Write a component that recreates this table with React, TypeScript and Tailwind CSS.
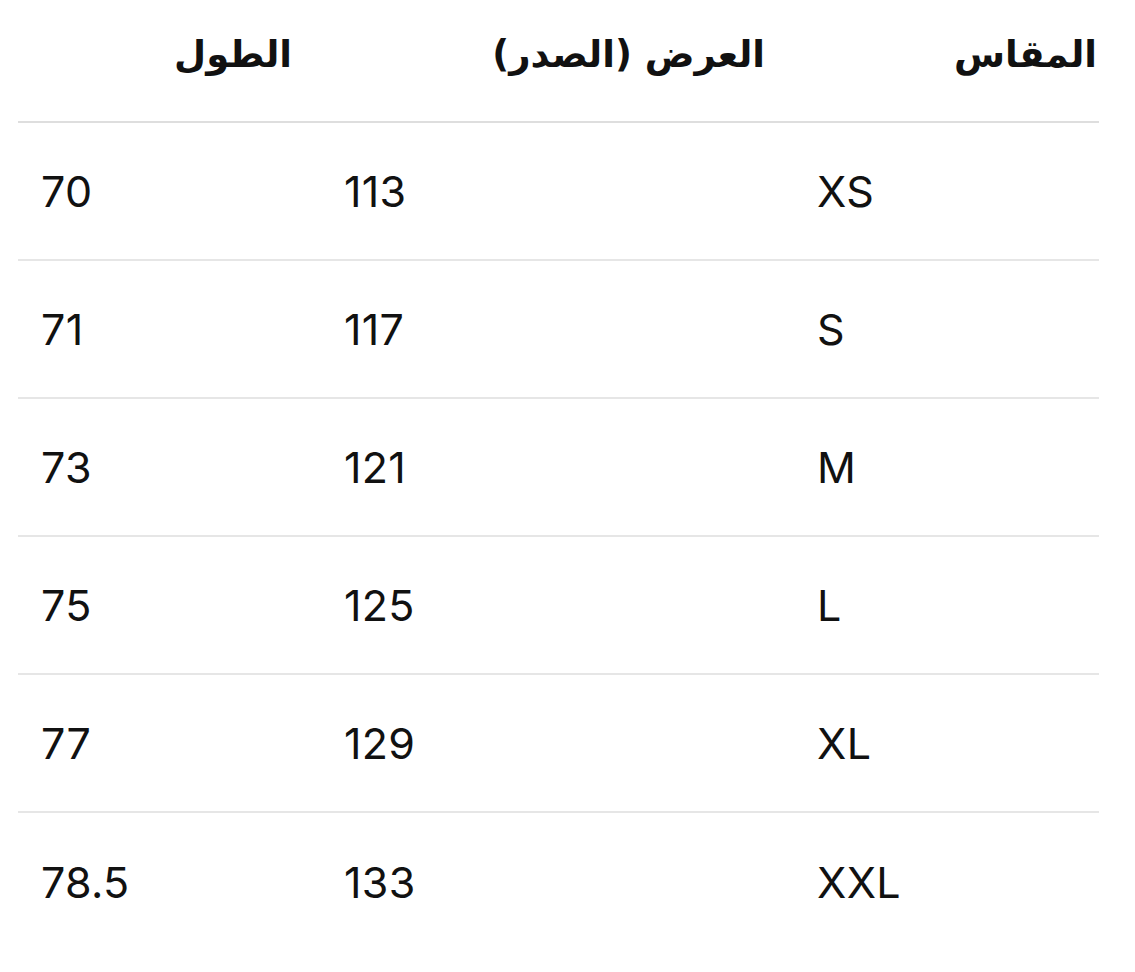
const HEADERS = [
  { label: 'المقاس', pad: 'pr-[2px]' },
  { label: 'العرض (الصدر)', pad: 'pr-[29px]' },
  { label: 'الطول', pad: 'pr-[29px]' },
]

const ROWS = [
  ['XS', '113', '70'],
  ['S', '117', '71'],
  ['M', '121', '73'],
  ['L', '125', '75'],
  ['XL', '129', '77'],
  ['XXL', '133', '78.5'],
]

export default function App() {
  return (
    <div className="w-[1135px] h-[972px] bg-white overflow-hidden pl-[18px] pr-[36px]">
      <div dir="rtl" className="text-[#111]">
        {/* رأس الجدول */}
        <div className="grid grid-cols-[305px_473px_303px] h-[123px] border-b-2 border-[#dedede]">
          {HEADERS.map(({ label, pad }) => (
            <div
              key={label}
              className={`flex items-center justify-start ${pad} pb-[12px] font-bold text-[37px] font-['DejaVu_Sans',sans-serif]`}
            >
              {label}
            </div>
          ))}
        </div>

        {/* الصفوف */}
        {ROWS.map((row, i) => (
          <div
            key={row[0]}
            className={`grid grid-cols-[305px_473px_303px] h-[138px] ${i < ROWS.length - 1 ? 'border-b-2 border-[#e6e6e6]' : ''}`}
          >
            {row.map((cell, j) => (
              <div
                key={j}
                dir="ltr"
                className="flex items-center pl-[23px] text-[43px] font-['Inter',sans-serif] tracking-[0.3px]"
              >
                {cell}
              </div>
            ))}
          </div>
        ))}
      </div>
    </div>
  )
}
